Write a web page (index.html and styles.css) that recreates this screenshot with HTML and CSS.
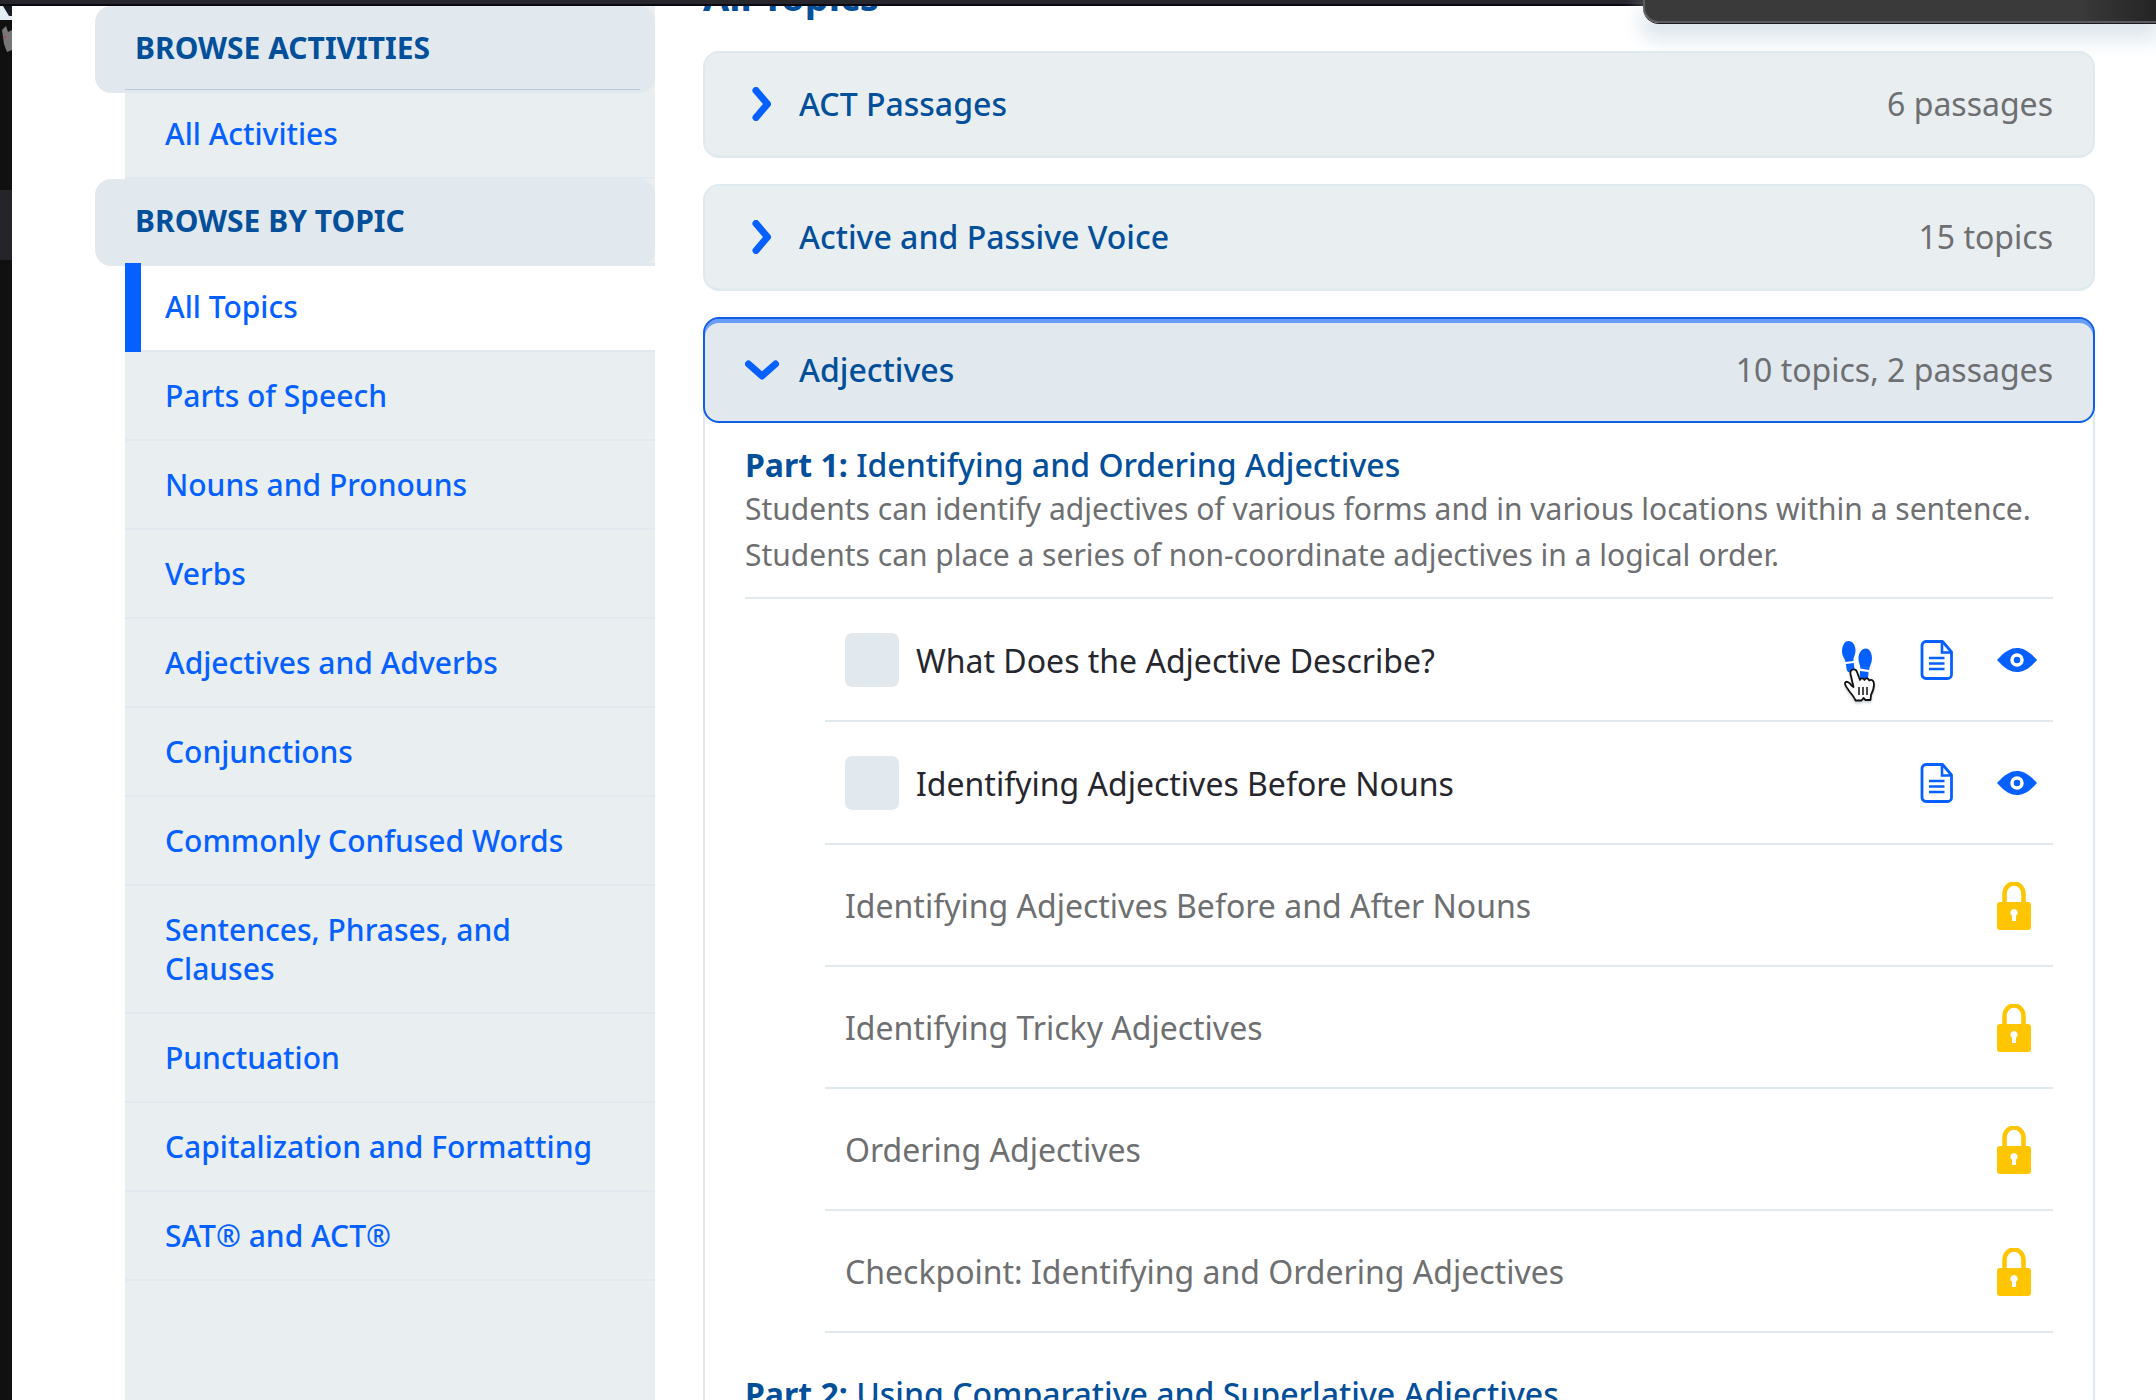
FILE: index.html
```
<!DOCTYPE html>
<html lang="en">
<head>
<meta charset="utf-8">
<title>All Topics</title>
<link rel="stylesheet" href="styles.css">
</head>
<body>
<svg class="sprite" aria-hidden="true">
  <symbol id="chevron-right" viewBox="0 0 34 34"><path d="M11 3.500 22.500 17 11 30.500" fill="none" stroke="currentColor" stroke-width="7" stroke-linecap="round" stroke-linejoin="round"/></symbol>
  <symbol id="chevron-down" viewBox="0 0 34 34"><path d="M3.500 11 17 23 30.500 11" fill="none" stroke="currentColor" stroke-width="7" stroke-linecap="round" stroke-linejoin="round"/></symbol>
  <symbol id="doc" viewBox="0 0 40 40">
    <path d="M9 1.500H25.500L34.500 12V34.500a4 4 0 0 1-4 4H9a4 4 0 0 1-4-4V5.500a4 4 0 0 1 4-4Z" fill="none" stroke="currentColor" stroke-width="2.800" stroke-linejoin="round"/>
    <path d="M25 2V12.500H34.500M12 18H27.500M12 23.500H27.500M12 29H27.500" fill="none" stroke="currentColor" stroke-width="2.600"/>
  </symbol>
  <symbol id="eye" viewBox="0 0 40 40">
    <path d="M0 20C8 11 14 8 20 8S32 11 40 20C32 29 26 32 20 32S8 29 0 20Z" fill="currentColor"/>
    <circle cx="20" cy="20" r="5" fill="none" stroke="#fff" stroke-width="3.500"/>
  </symbol>
  <symbol id="lock" viewBox="0 0 34 48">
    <path d="M7.500 21V12a9.500 10.500 0 0 1 19 0V21" fill="none" stroke="currentColor" stroke-width="4.500"/>
    <rect x="0" y="20" width="34" height="28" rx="3" fill="currentColor"/>
    <path d="M17 27a3.700 3.700 0 0 1 2 6.800V39H15V33.800A3.700 3.700 0 0 1 17 27Z" fill="#fff"/>
  </symbol>
  <symbol id="steps" viewBox="0 0 40 40">
    <g fill="currentColor">
      <path d="M11.500 1C7.500 1 5 6 5 11.500 5 16 7.500 18 8.500 22L16.500 21C16 17.500 18.500 15 18.500 10.500 18.500 5 15.500 1 11.500 1Z"/>
      <path d="M8.800 24 16.800 23 17.500 29Q17 32 14 32.500 10.500 32.500 9.800 30Z"/>
      <path d="M29 8.500C24.500 8.500 21.500 13 21.500 18.500 21.500 23 23.500 25 23.300 28.500L32 30C32.500 26 35 23 35 18.500 35 13 32.500 8.500 29 8.500Z"/>
      <path d="M23 31 31.500 32 31 38.500H22.500Z"/>
    </g>
  </symbol>
</svg>

<div class="topbar"></div>
<div class="desktop">
  <div class="dock">
    <svg class="dock-art" viewBox="0 0 12 260" aria-hidden="true">
      <path d="M0 0H9L12 4V14H0Z" fill="#e4edf3"/><path d="M0 0H12V10H9L3 0Z" fill="#171b22"/>
      <path d="M2 24 6 20 8 26 12 24V44L7 46 4 38Z" fill="#77777a"/><circle cx="5" cy="31" r="1" fill="#c8284a"/>
      <path d="M0 184H12V254H0Z" fill="#242429"/>
    </svg>
  </div>
  <div class="page">
    <nav class="sidebar">
      <h2 class="nav-title nav-title-ruled">BROWSE ACTIVITIES</h2>
      <ul class="nav-list">
        <li><a class="nav-link" href="#">All Activities</a></li>
      </ul>
      <h2 class="nav-title">BROWSE BY TOPIC</h2>
      <ul class="nav-list">
        <li><a class="nav-link active" href="#" aria-current="page">All Topics</a></li>
        <li><a class="nav-link" href="#">Parts of Speech</a></li>
        <li><a class="nav-link" href="#">Nouns and Pronouns</a></li>
        <li><a class="nav-link" href="#">Verbs</a></li>
        <li><a class="nav-link" href="#">Adjectives and Adverbs</a></li>
        <li><a class="nav-link" href="#">Conjunctions</a></li>
        <li><a class="nav-link" href="#">Commonly Confused Words</a></li>
        <li><a class="nav-link" href="#">Sentences, Phrases, and Clauses</a></li>
        <li><a class="nav-link" href="#">Punctuation</a></li>
        <li><a class="nav-link" href="#">Capitalization and Formatting</a></li>
        <li><a class="nav-link" href="#">SAT® and ACT®</a></li>
      </ul>
    </nav>

    <main class="topics">
      <h1 class="page-title">All Topics</h1>
      <div class="accordion">
        <button class="card" type="button" aria-expanded="false">
          <svg class="chevron"><use href="#chevron-right"/></svg>
          <span class="card-name">ACT Passages</span><span class="card-count">6 passages</span>
        </button>
        <button class="card" type="button" aria-expanded="false">
          <svg class="chevron"><use href="#chevron-right"/></svg>
          <span class="card-name">Active and Passive Voice</span><span class="card-count">15 topics</span>
        </button>
        <section>
          <button class="card open" type="button" aria-expanded="true">
            <svg class="chevron"><use href="#chevron-down"/></svg>
            <span class="card-name">Adjectives</span><span class="card-count">10 topics, 2 passages</span>
          </button>
          <div class="panel">
            <h3 class="part-title"><strong>Part 1:</strong> Identifying and Ordering Adjectives</h3>
            <p class="part-text">Students can identify adjectives of various forms and in various locations within a sentence. Students can place a series of non-coordinate adjectives in a logical order.</p>
            <ul class="lessons">
              <li class="lesson">
                <input class="tick" type="checkbox" id="lesson-1">
                <label class="lesson-name" for="lesson-1">What Does the Adjective Describe?</label>
                <span class="actions">
                  <button class="action" type="button" aria-label="Walkthrough">
                    <svg class="icon"><use href="#steps"/></svg>
                    <svg class="pointer" viewBox="0 0 34 36" aria-hidden="true">
                      <path d="M10 1.500C12 1 13.300 2 14 4L17 12C17.300 9.800 20.800 9.800 21.500 12 22.500 9.600 25.500 10 26.200 12.500 28.500 10.800 30.800 12.500 31 16 31.200 20.500 29.500 24 28 27L27.500 32H22.500L20.500 30 18.500 32.500H12.500C11.500 29.500 9 26.500 6.500 23.500 4.500 20.500 1.500 17 2 15 3 12.600 6.500 14 8.500 17.500L10.500 19 7.500 6C7 3.500 8 2 10 1.500Z" fill="#fff" stroke="#111" stroke-width="1.800" stroke-linejoin="round"/>
                      <path d="M16 19V27M20 19V27M24 19V27" stroke="#111" stroke-width="1.500"/>
                    </svg>
                  </button>
                  <button class="action" type="button" aria-label="Print"><svg class="icon"><use href="#doc"/></svg></button>
                  <button class="action" type="button" aria-label="Preview"><svg class="icon"><use href="#eye"/></svg></button>
                </span>
              </li>
              <li class="lesson">
                <input class="tick" type="checkbox" id="lesson-2">
                <label class="lesson-name" for="lesson-2">Identifying Adjectives Before Nouns</label>
                <span class="actions">
                  <button class="action" type="button" aria-label="Print"><svg class="icon"><use href="#doc"/></svg></button>
                  <button class="action" type="button" aria-label="Preview"><svg class="icon"><use href="#eye"/></svg></button>
                </span>
              </li>
              <li class="lesson locked"><span class="lesson-name">Identifying Adjectives Before and After Nouns</span><svg class="lock"><use href="#lock"/></svg></li>
              <li class="lesson locked"><span class="lesson-name">Identifying Tricky Adjectives</span><svg class="lock"><use href="#lock"/></svg></li>
              <li class="lesson locked"><span class="lesson-name">Ordering Adjectives</span><svg class="lock"><use href="#lock"/></svg></li>
              <li class="lesson locked"><span class="lesson-name">Checkpoint: Identifying and Ordering Adjectives</span><svg class="lock"><use href="#lock"/></svg></li>
            </ul>
            <h3 class="part-title"><strong>Part 2:</strong> Using Comparative and Superlative Adjectives</h3>
          </div>
        </section>
      </div>
    </main>
  </div>
</div>
<div class="overlay"></div>
</body>
</html>
```
FILE: styles.css
```
* { box-sizing: border-box; }

:root {
  --link: #0560ff;
  --navy: #044f9a;
  --grey: #6e6f71;
  --tint: #e1e9ef;
  --tint-light: #e9eef1;
  --line: #e0eaee;
}

body {
  margin: 0;
  height: 100vh;
  display: flex;
  flex-direction: column;
  overflow: hidden;
  background: #101010;
  color: #26272e;
  font-family: "Noto Sans", "Open Sans", sans-serif;
  font-size: 32px;
}

ul { list-style: none; margin: 0; padding: 0; }
button { font: inherit; color: inherit; cursor: pointer; }

.sprite { position: absolute; width: 0; height: 0; }

.topbar { flex: none; height: 6px; background: #26262c; border-bottom: 2px solid #0a0810; }

.desktop { flex: 1; min-height: 0; display: flex; }
.dock { flex: none; width: 12px; }
.dock-art { display: block; width: 12px; height: 260px; }

.page {
  flex: 1;
  overflow: hidden;
  display: grid;
  grid-template-columns: 530px 1fr;
  column-gap: 48px;
  padding: 0 61px 0 113px;
  background: #fff;
}

/* Sidebar */
.sidebar { background: var(--tint-light); }

.nav-title {
  position: relative;
  margin: 0 0 0 -30px;
  padding: 24px 40px;
  border-radius: 16px;
  background: var(--tint);
  box-shadow: 0 3px var(--tint);
  color: var(--navy);
  font-size: 30px;
  line-height: 36px;
  font-weight: 700;
}
.nav-title-ruled::after {
  content: "";
  position: absolute;
  left: 30px;
  right: 15px;
  bottom: 0;
  height: 1px;
  background: #b9c9d9;
}

.nav-link {
  display: block;
  padding: 24px 40px;
  border-bottom: 2px solid var(--tint);
  color: var(--link);
  font-size: 30px;
  line-height: 39px;
  font-weight: 500;
  text-decoration: none;
}
.nav-link.active {
  position: relative;
  background: linear-gradient(var(--tint) 3px, #fff 3px);
}
.nav-link.active::before {
  content: "";
  position: absolute;
  left: 0;
  top: 0;
  bottom: -2px;
  width: 16px;
  background: var(--link);
}

/* Topic accordion */
.page-title {
  margin: -34px 0 31px;
  color: var(--navy);
  font-size: 38px;
  line-height: 48px;
  font-weight: 700;
}

.accordion { display: flex; flex-direction: column; gap: 26px; }

.card {
  position: relative;
  display: flex;
  align-items: center;
  gap: 20px;
  width: 100%;
  padding: 28px 40px;
  border: 2px solid var(--line);
  border-bottom-width: 3px;
  border-radius: 16px;
  background: var(--tint-light);
  line-height: 46px;
  text-align: left;
}
.card.open {
  border: 2px solid #0f5fe8;
  background: var(--tint);
  box-shadow: inset 0 4px #6a9df8;
}
.chevron { flex: none; width: 34px; height: 34px; color: var(--link); }
.card-name { flex: 1; color: var(--navy); font-weight: 500; }
.card-count { color: var(--grey); }

.panel {
  margin-top: -16px;
  padding: 37px 40px 60px;
  border: 2px solid var(--line);
  border-top: 0;
}

.part-title { margin: 0; color: var(--navy); font-size: 32px; line-height: 42px; font-weight: 500; }
.part-title strong { font-weight: 700; }
.part-text {
  margin: 0;
  padding-bottom: 19px;
  border-bottom: 2px solid var(--line);
  color: var(--grey);
  font-size: 30px;
  line-height: 46px;
}

.lessons { margin: 0 0 40px 80px; }
.lesson {
  display: flex;
  align-items: center;
  gap: 17px;
  min-height: 123px;
  padding: 1px 16px 0 20px;
  border-bottom: 2px solid var(--line);
}
.lesson.locked { min-height: 122px; padding-right: 22px; color: var(--grey); }
.lesson-name { flex: 1; }

.tick {
  appearance: none;
  flex: none;
  width: 54px;
  height: 54px;
  margin: 0;
  border-radius: 7px;
  background: var(--tint);
}

.actions { display: flex; gap: 40px; }
.action { position: relative; padding: 0; border: 0; background: none; color: var(--link); }
.icon { display: block; width: 40px; height: 40px; }
.lock { flex: none; width: 34px; height: 48px; color: #ffc500; }
.pointer {
  position: absolute;
  left: 6px;
  top: 28px;
  width: 34px;
  height: 36px;
  filter: drop-shadow(0 2px 1px #c8d0d6);
}

/* Floating window at the corner of the screen */
.overlay {
  position: absolute;
  top: 0;
  right: 0;
  width: 513px;
  height: 23px;
  border: solid #5d5d61;
  border-width: 0 0 2px 2px;
  border-bottom-left-radius: 16px;
  background: linear-gradient(90deg, #3a3a3b 85%, #242424);
  box-shadow: 0 1px #1c1c20, 0 14px 20px 4px #dfe8ee;
}
```
